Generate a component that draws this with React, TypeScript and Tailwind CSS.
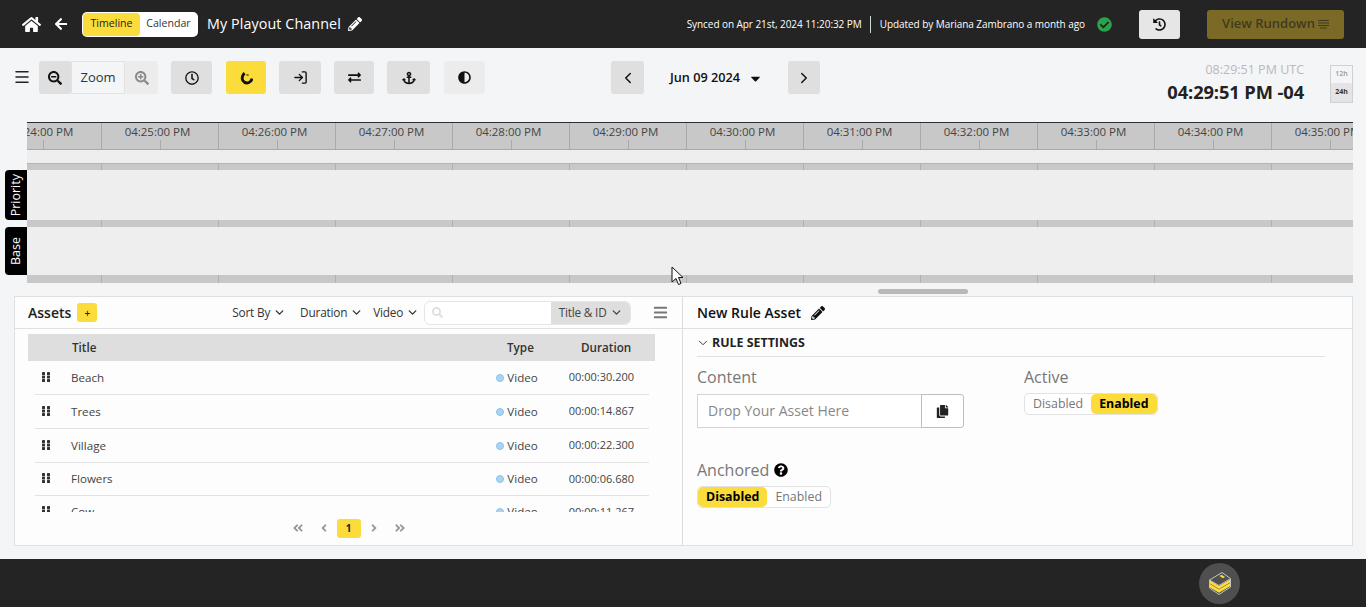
import React from "react";
import { FaHome, FaArrowLeft, FaPencilAlt, FaSearchMinus, FaSearchPlus, FaRegClock, FaAnchor, FaAdjust, FaExchangeAlt, FaHistory, FaCopy, FaQuestionCircle, FaCheckCircle, FaCaretDown, FaAngleDoubleLeft, FaAngleDoubleRight, FaAngleLeft, FaAngleRight, FaBars, FaSearch } from "react-icons/fa";
import { LogIn, ChevronDown, ChevronLeft, ChevronRight, Menu } from "lucide-react";

const times = ["04:24:00 PM","04:25:00 PM","04:26:00 PM","04:27:00 PM","04:28:00 PM","04:29:00 PM","04:30:00 PM","04:31:00 PM","04:32:00 PM","04:33:00 PM","04:34:00 PM","04:35:00 PM"];

const rows = [
  ["Beach","00:00:30.200",34],
  ["Trees","00:00:14.867",34],
  ["Village","00:00:22.300",34],
  ["Flowers","00:00:06.680",33],
  ["Cow","00:00:11.267",33],
] as const;

function Band({ h = "h-[7px]" }: { h?: string }) {
  return (
    <div className={`flex ${h} -ml-[42px] bg-[#c8c8c8] shrink-0`}>
      {times.map((t) => <div key={t} className="w-[117px] shrink-0 border-r border-[#b0b0b0]" />)}
    </div>
  );
}

function Grip() {
  return (
    <svg width="8" height="10" viewBox="0 0 8 10" fill="#333">
      {[0,3.5,7].map((y) => [0,5].map((x) => <rect key={`${x}${y}`} x={x} y={y} width="3" height="3" rx="0.6" />))}
    </svg>
  );
}

function Tool({ w, children, cls = "bg-[#dfdfdf]" }: { w: string; children: React.ReactNode; cls?: string }) {
  return <div className={`${w} ${cls} h-[33px] rounded-[3px] flex items-center justify-center text-[#111]`}>{children}</div>;
}

function Filter({ label }: { label: string }) {
  return (
    <div className="flex items-center gap-[3px] text-[11.8px] text-[#333] tracking-[-0.2px]">
      {label}<ChevronDown size={13} strokeWidth={2.5} />
    </div>
  );
}

function Toggle({ left, right, active }: { left: string; right: string; active: "left" | "right" }) {
  const on = "bg-[#fbdc3a] text-black font-bold rounded-[5px]";
  const off = "text-[#777]";
  return (
    <div className="flex h-[22px] w-fit items-stretch rounded-[5px] border border-[#e2e2e2] bg-white text-[12.4px]">
      <div className={`flex items-center px-[8px] ${active === "left" ? on : off}`}>{left}</div>
      <div className={`flex items-center px-[8px] ${active === "right" ? on : off}`}>{right}</div>
    </div>
  );
}

export default function App() {
  return (
    <div className="h-[607px] w-[1366px] overflow-hidden flex flex-col bg-[#f4f5f7] font-['Open_Sans',sans-serif] text-[#222]">
      {/* header */}
      <header className="h-[48px] shrink-0 bg-[#242424] flex items-center pl-[22px] text-white">
        <FaHome size={19} />
        <FaArrowLeft size={14} className="ml-[13px]" />
        <div className="ml-[14px] h-[25px] w-[116px] rounded-[5px] bg-white p-[1px] flex text-[10.6px] text-[#222]">
          <div className="w-[57px] rounded-[4px] bg-[#fbdc3a] flex items-center justify-center">Timeline</div>
          <div className="flex-1 flex items-center justify-center text-[#333]">Calendar</div>
        </div>
        <div className="ml-[9px] text-[14.3px] tracking-[0.1px]">My Playout Channel</div>
        <FaPencilAlt size={14} className="ml-[7px]" />
        <div className="ml-auto flex items-center text-[10px] tracking-[-0.06px]">
          <span>Synced on Apr 21st, 2024 11:20:32 PM</span>
          <span className="ml-[8px] mr-[9px] h-[17px] w-px bg-[#cfd8dc]" />
          <span>Updated by Mariana Zambrano a month ago</span>
        </div>
        <FaCheckCircle size={15} className="ml-[12px] text-[#2aa34a]" />
        <div className="ml-[27px] h-[29px] w-[41px] rounded-[3px] bg-[#e6e6e6] flex items-center justify-center text-[#111]">
          <FaHistory size={13} />
        </div>
        <div className="ml-[27px] mr-[22px] h-[29px] w-[137px] rounded-[3px] bg-[#7b6a26] flex items-center justify-center gap-[3px] text-[13px] font-semibold text-[#3f3a20]">
          View Rundown
          <svg width="11" height="10" viewBox="0 0 11 10" stroke="#3f3a20" strokeWidth="1.2">
            <path d="M0 1.5h11M0 4h11M0 6.5h11M2 9h7" />
          </svg>
        </div>
      </header>

      {/* toolbar */}
      <div className="h-[74px] shrink-0 flex items-start pt-[13px] pl-[13px] relative">
        <Menu size={18} strokeWidth={2} className="mt-[7px] text-[#222]" />
        <div className="ml-[8px] flex">
          <Tool w="w-[32px]"><FaSearchMinus size={14} /></Tool>
          <div className="w-[54px] h-[33px] border border-[#e2e2e2] flex items-center justify-center text-[13px] text-[#333]">Zoom</div>
          <Tool w="w-[33px]" cls="bg-[#ececec] text-[#888]"><FaSearchPlus size={14} className="text-[#8a8a8a]" /></Tool>
        </div>
        <div className="ml-[13px]"><Tool w="w-[41px]"><FaRegClock size={14} /></Tool></div>
        <div className="ml-[14px]">
          <Tool w="w-[40px]" cls="bg-[#fbdc3a]">
            <svg width="13" height="14" viewBox="0 0 13 14" fill="none" stroke="#111" strokeWidth="2.8">
              <path d="M4.5 2 Q1 6 2.8 9.5 Q5 13 9 11.5 Q11.5 10.5 12 7.5" />
              <path d="M7.5 3.5v1" strokeWidth="2.4" />
            </svg>
          </Tool>
        </div>
        <div className="ml-[13px]"><Tool w="w-[42px]"><LogIn size={15} strokeWidth={2.2} /></Tool></div>
        <div className="ml-[13px]"><Tool w="w-[40px]"><FaExchangeAlt size={13} /></Tool></div>
        <div className="ml-[13px]"><Tool w="w-[43px]"><FaAnchor size={14} /></Tool></div>
        <div className="ml-[14px]"><Tool w="w-[41px]" cls="bg-[#ececec]"><FaAdjust size={13} /></Tool></div>
        <div className="ml-[126px]"><Tool w="w-[33px]"><ChevronLeft size={18} strokeWidth={2} /></Tool></div>
        <div className="w-[144px] h-[33px] flex items-center justify-center gap-[8px] pt-[1px] pl-[1px] text-[12.7px] font-semibold text-[#111]">
          Jun 09 2024 <FaCaretDown size={15} />
        </div>
        <Tool w="w-[32px]"><ChevronRight size={18} strokeWidth={2} /></Tool>
        <div className="ml-auto mr-[26px] flex flex-col items-end">
          <div className="text-[12.5px] leading-[18px] text-[#b9b9b9]">08:29:51 PM UTC</div>
          <div className="text-[18.3px] leading-[24px] mt-[1px] font-bold text-[#222] tracking-[-0.1px]">04:29:51 PM -04</div>
        </div>
        <div className="mr-[13px] mt-[4px] w-[23px] h-[38px] border border-[#d0d0d0] flex flex-col text-[7px] font-semibold">
          <div className="h-[17px] flex items-center justify-center text-[#999]">12h</div>
          <div className="flex-1 bg-[#e4e4e4] flex items-center justify-center text-[#333] font-bold rounded-t-[2px]">24h</div>
        </div>
      </div>

      {/* timeline */}
      <div className="relative h-[161px] shrink-0 ml-[27px] mr-[13px]">
        <div className="h-full overflow-hidden flex flex-col bg-[#eeeeee]">
          <div className="flex h-[28px] shrink-0 -ml-[42px] bg-[#c8c8c8] border-t border-[#2e2e2e] border-b border-b-[#aaa]">
            {times.map((t) => (
              <div key={t} className="relative w-[117px] shrink-0 border-r border-[#aaa] text-center text-[11.5px] leading-[15px] pt-[1px] pr-[5px] text-[#444] whitespace-nowrap">
                {t}
                <div className="absolute left-[58px] bottom-0 h-[9px] w-px bg-[#aaa]" />
              </div>
            ))}
          </div>
          <div className="h-[14px] shrink-0 border-b border-[#b5b5b5]" />
          <Band h="h-[6px]" />
          <div className="h-[50px] shrink-0" />
          <Band />
          <div className="h-[48px] shrink-0" />
          <Band h="h-[8px]" />
        </div>
        <div className="absolute left-[-22px] top-[48px] h-[50px] w-[22px] bg-black rounded-l-[4px] flex items-center justify-center">
          <span className="[writing-mode:vertical-rl] rotate-180 text-white text-[12.5px]">Priority</span>
        </div>
        <div className="absolute left-[-22px] top-[105px] h-[48px] w-[22px] bg-black rounded-l-[4px] flex items-center justify-center">
          <span className="[writing-mode:vertical-rl] rotate-180 text-white text-[12.5px]">Base</span>
        </div>
      </div>

      {/* resize handle */}
      <div className="h-[13px] shrink-0 flex items-start pl-[878px] pt-[6px]">
        <div className="h-[5px] w-[90px] rounded-full bg-[#b8b8b8]" />
      </div>

      {/* panels */}
      <div className="h-[250px] shrink-0 mx-[14px] w-[1339px] flex border border-[#e0e0e0] bg-[#fdfdfd]">
        <section className="w-[668px] shrink-0 border-r border-[#dcdcdc] flex flex-col">
          <div className="h-[32px] shrink-0 border-b border-[#e0e0e0] flex items-center pl-[13px]">
            <span className="text-[14px] font-semibold text-[#222]">Assets</span>
            <div className="ml-[6px] h-[19px] w-[20px] rounded-[3px] bg-[#fbdc3a] flex items-center justify-center text-[10px] leading-none font-semibold">+</div>
            <div className="ml-[135px]"><Filter label="Sort By" /></div>
            <div className="ml-[14px]"><Filter label="Duration" /></div>
            <div className="ml-[10px]"><Filter label="Video" /></div>
            <div className="ml-[5px] h-[24px] w-[207px] rounded-[6px] border border-[#e6e6e6] bg-white flex overflow-hidden">
              <div className="flex-1 flex items-center pl-[7px]"><FaSearch size={11} className="text-[#ddd]" /></div>
              <div className="w-[79px] bg-[#dedede] flex items-center justify-center gap-[3px] text-[11.8px] text-[#444] tracking-[-0.2px]">
                Title &amp; ID <ChevronDown size={13} strokeWidth={2.5} />
              </div>
            </div>
            <FaBars size={15} className="ml-[22px] text-[#777]" />
          </div>
          <div className="ml-[13px] mt-[5px] w-[627px] h-[27px] shrink-0 bg-[#dedede] flex items-center text-[11.7px] font-semibold text-[#333]">
            <span className="ml-[44px] w-[29px]">Title</span>
            <span className="ml-[406px] w-[29px]">Type</span>
            <span className="ml-[45px]">Duration</span>
          </div>
          <div className="h-[151px] shrink-0 overflow-hidden ml-[20px] w-[614px]">
            {rows.map(([name, dur, h]) => (
              <div key={name} style={{ height: h }} className="flex items-center border-b border-[#e2e2e2] text-[11.6px] text-[#444]">
                <span className="ml-[7px] w-[8px] -mt-[2px]"><Grip /></span>
                <span className="ml-[21px] flex-1">{name}</span>
                <span className="w-[8px] h-[8px] rounded-full bg-[#a9d4f5] border border-[#8ec2ea]" />
                <span className="ml-[3px]">Video</span>
                <span className="ml-[31px] mr-[15px] text-[11px]">{dur}</span>
              </div>
            ))}
          </div>
          <div className="flex-1 flex items-center justify-center pb-[1px] -ml-[1px] text-[#999]">
            <FaAngleDoubleLeft size={12} className="ml-[1px]" />
            <FaAngleLeft size={12} className="ml-[14px]" />
            <div className="ml-[7px] h-[19px] w-[24px] rounded-[3px] bg-[#fbdc3a] flex items-center justify-center text-[10px] font-bold text-[#222]">1</div>
            <FaAngleRight size={12} className="ml-[7px]" />
            <FaAngleDoubleRight size={12} className="ml-[14px]" />
          </div>
        </section>

        <section className="flex-1 flex flex-col">
          <div className="h-[32px] shrink-0 border-b border-[#e0e0e0] flex items-center pl-[14px]">
            <span className="text-[14px] font-semibold text-[#111]">New Rule Asset</span>
            <FaPencilAlt size={14} className="ml-[10px] text-[#111]" />
          </div>
          <div className="ml-[14px] mr-[27px] h-[28px] shrink-0 border-b border-[#e0e0e0] flex items-center pt-[1px]">
            <ChevronDown size={14} strokeWidth={1.6} className="-ml-[1px] text-[#333]" />
            <span className="ml-[2px] text-[12.4px] font-bold text-[#222]">RULE SETTINGS</span>
          </div>
          <div className="ml-[14px] mt-[9px] flex">
            <div className="w-[327px]">
              <div className="text-[16px] leading-[22px] text-[#777]">Content</div>
              <div className="mt-[6px] flex h-[34px] w-[267px]">
                <div className="w-[225px] border border-[#d4d4d4] flex items-center pl-[10px] pb-[1px] text-[14px] text-[#888] bg-white">Drop Your Asset Here</div>
                <div className="w-[43px] -ml-px border border-[#bdbdbd] rounded-r-[3px] flex items-center justify-center bg-white text-[#222]"><FaCopy size={13} /></div>
              </div>
            </div>
            <div>
              <div className="text-[16px] leading-[22px] text-[#777]">Active</div>
              <div className="mt-[5px]"><Toggle left="Disabled" right="Enabled" active="right" /></div>
            </div>
          </div>
          <div className="ml-[14px] mt-[31px] flex items-center h-[22px]">
            <span className="text-[16px] text-[#777]">Anchored</span>
            <FaQuestionCircle size={14} className="ml-[5px] text-black" />
          </div>
          <div className="ml-[14px] mt-[5px]"><Toggle left="Disabled" right="Enabled" active="left" /></div>
        </section>
      </div>

      {/* footer */}
      <footer className="mt-[13px] h-[48px] shrink-0 bg-[#242424] relative flex items-center pl-[1199px]">
        <div className="h-[41px] w-[41px] rounded-full bg-[#4f4f4f] flex items-center justify-center">
          <svg width="24" height="25" viewBox="0 0 24 25" fill="none" strokeLinejoin="round">
            <path d="M1.5 9v8L11 23.5 22.5 16V8" fill="#4f4f4f" stroke="#c4c4c4" strokeWidth="1" />
            <path d="M2 13l9 5.5L22 12v3.2l-11 6.6-9-5.4z" fill="#fbdc3a" />
            <path d="M2 9.5l9 5.5 11-6.5v3l-11 6.5-9-5.5z" fill="#fbdc3a" />
            <path d="M1.5 9L14 1.5 22.5 7.5 11 14.5z" fill="#4f4f4f" stroke="#c4c4c4" strokeWidth="1" />
            <path d="M11.5 5l2-1.2 3.5 2.2-2 1.2z" fill="#fbdc3a" />
          </svg>
        </div>
      </footer>

      {/* cursor */}
      <svg className="absolute left-[671px] top-[266px]" width="13" height="20" viewBox="0 0 13 20">
        <path d="M1 1v15l4-3.5 2.5 6 2.5-1-2.5-6H12z" fill="#fff" stroke="#111" strokeWidth="1" />
      </svg>
    </div>
  );
}
